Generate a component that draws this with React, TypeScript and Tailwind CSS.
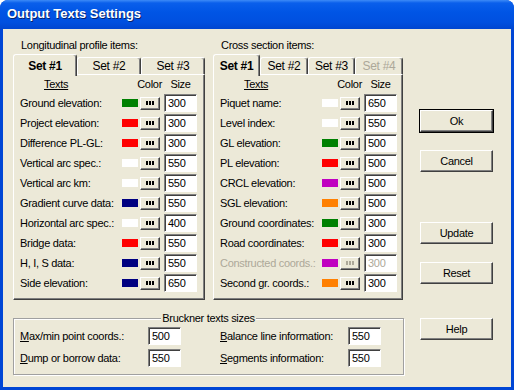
import React from "react";

type Row = { label: string; color: string; size: string; disabled?: boolean };

const leftRows: Row[] = [
  { label: "Ground elevation:", color: "#008000", size: "300" },
  { label: "Project elevation:", color: "#FF0000", size: "300" },
  { label: "Difference PL-GL:", color: "#FF0000", size: "300" },
  { label: "Vertical arc spec.:", color: "#FFFFFF", size: "550" },
  { label: "Vertical arc km:", color: "#FFFFFF", size: "550" },
  { label: "Gradient curve data:", color: "#000080", size: "550" },
  { label: "Horizontal arc spec.:", color: "#FFFFFF", size: "400" },
  { label: "Bridge data:", color: "#FF0000", size: "550" },
  { label: "H, I, S data:", color: "#000080", size: "550" },
  { label: "Side elevation:", color: "#000080", size: "650" },
];

const rightRows: Row[] = [
  { label: "Piquet name:", color: "#FFFFFF", size: "650" },
  { label: "Level index:", color: "#FFFFFF", size: "550" },
  { label: "GL elevation:", color: "#008000", size: "500" },
  { label: "PL elevation:", color: "#FF0000", size: "500" },
  { label: "CRCL elevation:", color: "#C000C0", size: "500" },
  { label: "SGL elevation:", color: "#FF8000", size: "500" },
  { label: "Ground coordinates:", color: "#008000", size: "300" },
  { label: "Road coordinates:", color: "#FF0000", size: "300" },
  { label: "Constructed coords.:", color: "#C000C0", size: "300", disabled: true },
  { label: "Second gr. coords.:", color: "#FF8000", size: "300" },
];

function Edit({ value, disabled }: { value: string; disabled?: boolean }) {
  return (
    <div
      className={`w-[33px] h-[18px] bg-white border border-t-[#808080] border-l-[#808080] border-b-white border-r-white shadow-[inset_1px_1px_0_#404040] pl-[3px] text-[11px] leading-[16px] ${
        disabled ? "text-[#ACA899]" : "text-black"
      }`}
    >
      {value}
    </div>
  );
}

function DotsButton({ disabled }: { disabled?: boolean }) {
  const bar = disabled ? "bg-[#ACA899]" : "bg-black";
  return (
    <div className="w-[20px] h-[13px] bg-[#ECE9D8] border border-t-white border-l-white border-b-[#404040] border-r-[#404040] shadow-[inset_-1px_-1px_0_#808080] flex items-center justify-center gap-[1px]">
      <div className={`w-[2px] h-[4px] ${bar}`} />
      <div className={`w-[2px] h-[4px] ${bar}`} />
      <div className={`w-[2px] h-[4px] ${bar}`} />
    </div>
  );
}

function TabPanel({
  title,
  tabs,
  widths,
  rows,
  width,
  pr,
}: {
  title: string;
  tabs: { label: string; disabled?: boolean }[];
  widths: string[];
  rows: Row[];
  width: string;
  pr: string;
}) {
  return (
    <div className={`flex flex-col ${width}`}>
      <div className="h-[16px] leading-[14px] pl-[8px] text-[11px]">{title}</div>
      <div className="h-[20px] flex items-start">
        {tabs.map((t, i) =>
          i === 0 ? (
            <div
              key={t.label}
              className={`${widths[i]} relative z-10 h-[22px] bg-[#ECE9D8] border-l border-t border-r border-l-white border-t-white border-r-[#404040] shadow-[inset_-1px_0_0_#808080] rounded-t-[3px] flex justify-center pt-[4px] text-[12px] leading-[14px] font-bold`}
            >
              {t.label}
            </div>
          ) : (
            <div
              key={t.label}
              className={`${widths[i]} mt-[3px] h-[17px] bg-[#ECE9D8] border-l border-t border-r border-l-white border-t-white border-r-[#404040] shadow-[inset_-1px_0_0_#808080] rounded-t-[3px] flex justify-center pt-[1px] text-[12px] leading-[14px] ${
                t.disabled ? "text-[#ACA899]" : "text-black"
              }`}
            >
              {t.label}
            </div>
          )
        )}
      </div>
      <div
        className={`h-[226px] border border-t-white border-l-white border-b-[#404040] border-r-[#404040] shadow-[inset_-1px_-1px_0_#808080] pt-[1px] pl-[6px] ${pr} flex flex-col`}
      >
        <div className="h-[17px] flex items-center text-[11px]">
          <span className="ml-[24px] underline">Texts</span>
          <span className="flex-1" />
          <span>Color</span>
          <span className="w-[33px] ml-[2px] text-center">Size</span>
        </div>
        {rows.map((r) => (
          <div key={r.label} className="h-[20px] flex items-center text-[11px]">
            <span
              className={`flex-1 whitespace-nowrap ${
                r.disabled ? "text-[#ACA899]" : "text-black"
              }`}
            >
              {r.label}
            </span>
            <div className="w-[16px] h-[8px]" style={{ backgroundColor: r.color }} />
            <div className="ml-[2px]">
              <DotsButton disabled={r.disabled} />
            </div>
            <div className="ml-[4px]">
              <Edit value={r.size} disabled={r.disabled} />
            </div>
          </div>
        ))}
      </div>
    </div>
  );
}

function Button({ label, def }: { label: string; def?: boolean }) {
  return (
    <div
      className={`w-[73px] h-[22px] bg-[#ECE9D8] border border-t-white border-l-white border-b-[#404040] border-r-[#404040] shadow-[inset_-1px_-1px_0_#808080] flex items-center justify-center text-[11px] ${
        def ? "outline outline-1 outline-black" : ""
      }`}
    >
      {label}
    </div>
  );
}

export default function App() {
  return (
    <div className="w-[514px] h-[390px] font-['Liberation_Sans',Arial,sans-serif] tracking-[-0.3px] text-black bg-white">
      <div className="w-[514px] h-[390px] flex flex-col rounded-t-[8px] bg-[#0046D5] overflow-hidden">
        <div className="h-[29px] shrink-0 bg-[linear-gradient(to_bottom,#3D8BF7_0px,#0A5FEB_3px,#0055E5_12px,#0050E0_22px,#0046D0_29px)] flex items-center pl-[7px] pb-[1px]">
          <span className="text-white font-bold text-[13px] tracking-[0px] [text-shadow:1px_1px_0_#0A246A]">
            Output Texts Settings
          </span>
        </div>
        <div className="flex-1 mx-[3px] mb-[3px] bg-[#ECE9D8] flex pl-[10px] pt-[9px]">
          <div className="flex flex-col w-[391px]">
            <div className="flex gap-[8px]">
              <TabPanel
                title="Longitudinal profile items:"
                tabs={[{ label: "Set #1" }, { label: "Set #2" }, { label: "Set #3" }]}
                widths={["w-[64px]", "w-[64px]", "w-[64px]"]}
                rows={leftRows}
                width="w-[192px]"
                pr="pr-[7px]"
              />
              <TabPanel
                title="Cross section items:"
                tabs={[
                  { label: "Set #1" },
                  { label: "Set #2" },
                  { label: "Set #3" },
                  { label: "Set #4", disabled: true },
                ]}
                widths={["w-[47px]", "w-[48px]", "w-[47px]", "w-[48px]"]}
                rows={rightRows}
                width="w-[190px]"
                pr="pr-[5px]"
              />
            </div>
            <div className="mt-[18px] relative h-[57px] border border-[#A0A0A0] shadow-[inset_1px_1px_0_white,1px_1px_0_white] pt-[8px] pl-[6px] flex flex-col gap-[4px] text-[11px]">
              <div className="absolute -top-[8px] left-0 right-0 flex justify-center">
                <span className="bg-[#ECE9D8] px-[1px] leading-[14px]">Bruckner texts sizes</span>
              </div>
              <div className="h-[18px] flex items-center">
                <span className="w-[128px]">
                  <span className="underline">M</span>ax/min point coords.:
                </span>
                <Edit value="500" />
                <span className="w-[39px]" />
                <span className="w-[128px]">
                  <span className="underline">B</span>alance line information:
                </span>
                <Edit value="550" />
              </div>
              <div className="h-[18px] flex items-center">
                <span className="w-[128px]">
                  <span className="underline">D</span>ump or borrow data:
                </span>
                <Edit value="550" />
                <span className="w-[39px]" />
                <span className="w-[128px]">
                  <span className="underline">S</span>egments information:
                </span>
                <Edit value="550" />
              </div>
            </div>
          </div>
          <div className="ml-[16px] flex flex-col pt-[72px]">
            <Button label="Ok" def />
            <div className="mt-[18px]">
              <Button label="Cancel" />
            </div>
            <div className="mt-[50px]">
              <Button label="Update" />
            </div>
            <div className="mt-[18px]">
              <Button label="Reset" />
            </div>
            <div className="mt-[34px]">
              <Button label="Help" />
            </div>
          </div>
        </div>
      </div>
    </div>
  );
}
